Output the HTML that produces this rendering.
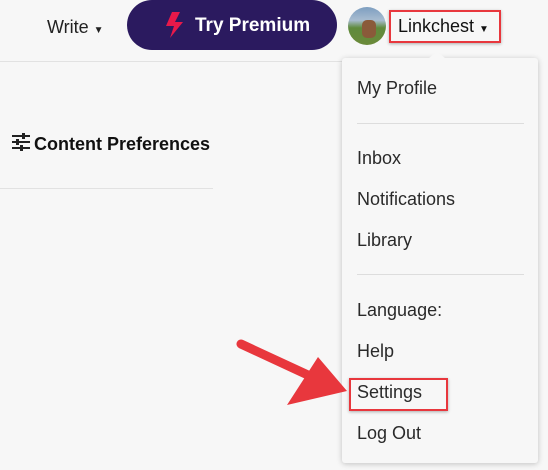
<!DOCTYPE html>
<html><head><style>
body{margin:0;width:548px;height:470px;background:#f7f7f7;font-family:"Liberation Sans",sans-serif;position:relative;overflow:hidden;color:#222}
.a{position:absolute}
.it{position:absolute;left:357px;font-size:18px;color:#2a2a2a;line-height:20px}
</style></head><body>
<div class="a" style="left:0;top:61px;width:343px;height:1px;background:#e2e2e2"></div>
<div class="a" style="left:0;top:188px;width:213px;height:1px;background:#e2e2e2"></div>
<div class="a" style="left:47px;top:17px;font-size:18px;color:#222">Write <span style="font-size:10px">▼</span></div>
<div class="a" style="left:127px;top:0;width:210px;height:50px;border-radius:25px;background:#2b1a5f"></div>
<svg class="a" style="left:163px;top:12px" width="24" height="26" viewBox="0 0 24 26"><path d="M9 0h8l-5 10h8L7 26l4-12H3z" fill="#e8194a"/></svg>
<div class="a" style="left:195px;top:15px;font-size:19px;font-weight:bold;color:#fff">Try Premium</div>
<div class="a" style="left:348px;top:7px;width:38px;height:38px;border-radius:50%;background:linear-gradient(#7d9ec0 0,#a8bcd0 35%,#5f8a3c 55%,#6b8a3a 100%)"></div>
<div class="a" style="left:362px;top:20px;width:14px;height:18px;border-radius:5px;background:#8a5a3a"></div>
<div class="a" style="left:389px;top:10px;width:108px;height:29px;border:2px solid #e8373d;box-shadow:0 1px 3px rgba(0,0,0,.3)"></div>
<div class="a" style="left:398px;top:16px;font-size:18px;color:#111">Linkchest <span style="font-size:10px">▼</span></div>
<svg class="a" style="left:11px;top:133px" width="20" height="18" viewBox="0 0 20 18"><g stroke="#222" stroke-width="2"><path d="M1 3h18M1 9h18M1 15h18"/></g><g fill="#222"><rect x="11" y="0" width="3" height="6"/><rect x="5" y="6" width="3" height="6"/><rect x="9" y="12" width="3" height="6"/></g></svg>
<div class="a" style="left:34px;top:134px;font-size:18px;font-weight:bold;color:#111">Content Preferences</div>
<div class="a" style="left:342px;top:58px;width:196px;height:405px;background:#f7f7f7;box-shadow:0 1px 6px rgba(0,0,0,.22);border-radius:3px"></div>
<div class="a" style="left:428px;top:51px;width:0;height:0;border-left:9px solid transparent;border-right:9px solid transparent;border-bottom:8px solid #f7f7f7"></div>
<div class="a" style="left:357px;top:123px;width:167px;height:1px;background:#ddd"></div>
<div class="a" style="left:357px;top:274px;width:167px;height:1px;background:#ddd"></div>
<div class="it" style="top:78px">My Profile</div>
<div class="it" style="top:148px">Inbox</div>
<div class="it" style="top:189px">Notifications</div>
<div class="it" style="top:230px">Library</div>
<div class="it" style="top:300px">Language:</div>
<div class="it" style="top:341px">Help</div>
<div class="it" style="top:382px">Settings</div>
<div class="it" style="top:423px">Log Out</div>
<div class="a" style="left:349px;top:378px;width:95px;height:29px;border:2px solid #e8373d;box-shadow:0 1px 3px rgba(0,0,0,.3)"></div>
<svg class="a" style="left:230px;top:335px" width="120" height="70" viewBox="0 0 120 70"><path d="M11 9L80 41" stroke="#e8373d" stroke-width="9" stroke-linecap="round"/><path d="M117 56L57 70L88 22z" fill="#e8373d"/></svg>
</body></html>
